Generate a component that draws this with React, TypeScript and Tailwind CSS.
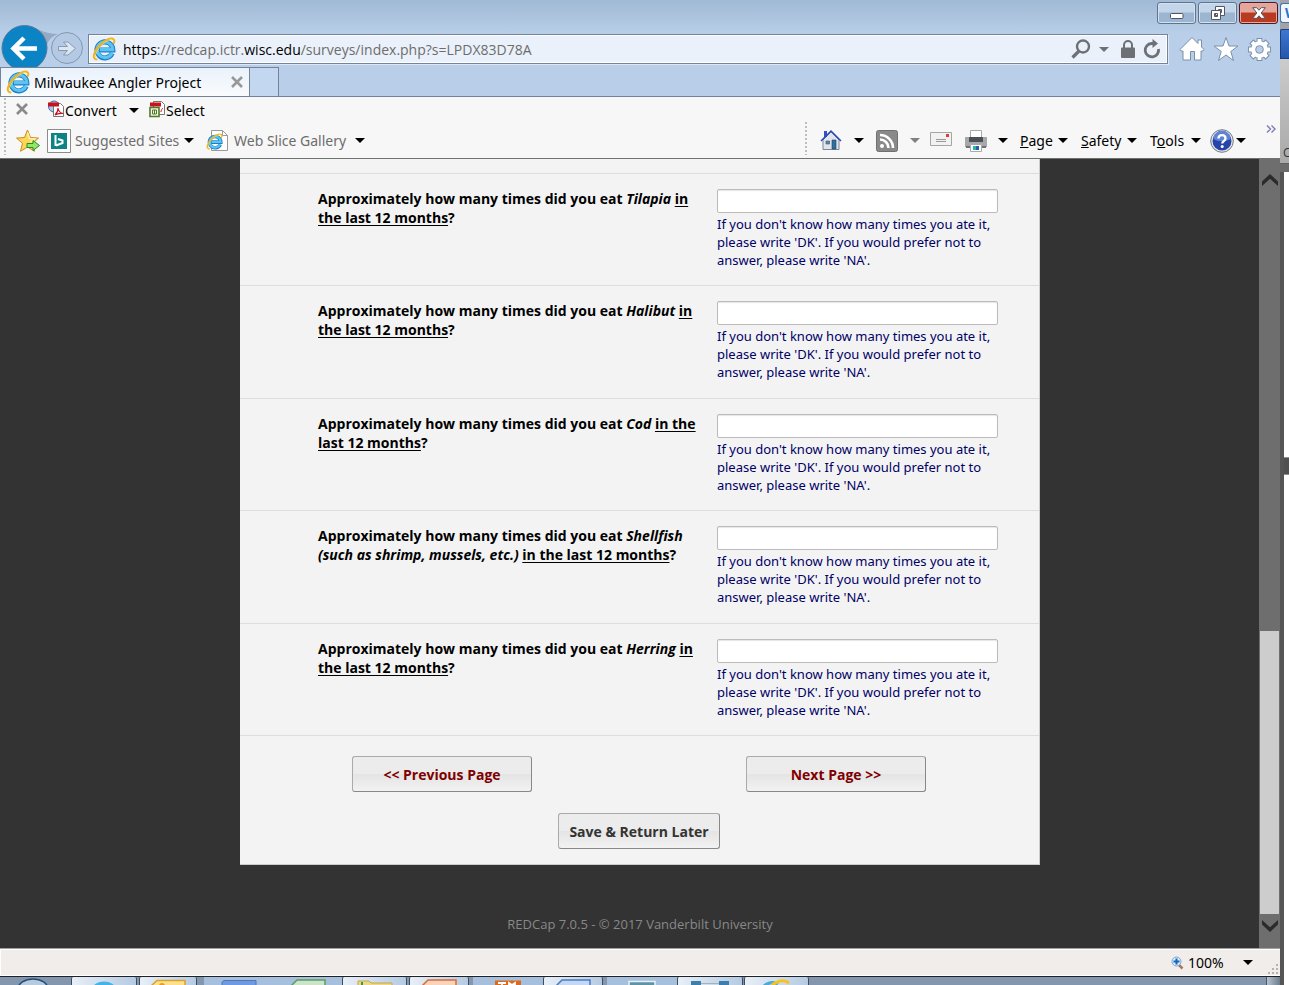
import { useState } from 'react';
import type { ReactNode } from 'react';

const questions: { id: string; fish: string }[] = [
  { id: 'tilapia', fish: 'Tilapia' },
  { id: 'halibut', fish: 'Halibut' },
  { id: 'cod', fish: 'Cod' },
  { id: 'shellfish', fish: 'Shellfish (such as shrimp, mussels, etc.)' },
  { id: 'herring', fish: 'Herring' },
];

function Caret({ className = 'text-black' }: { className?: string }) {
  return (
    <svg viewBox="0 0 10 5" className={`h-[5px] w-[10px] shrink-0 ${className}`} fill="currentColor" aria-hidden="true">
      <path d="M0 0h10L5 5z" />
    </svg>
  );
}

function IeLogo({ className = 'size-6' }: { className?: string }) {
  return (
    <svg viewBox="0 0 24 24" className={`shrink-0 ${className}`} fill="none" aria-hidden="true">
      <path
        d="M20.2 16.2A8 8 0 1 1 20.9 12.9H7.5"
        stroke="#1b7fc4"
        strokeWidth="5"
      />
      <path d="M20 16A7.8 7.8 0 1 1 20.7 12.6H8" stroke="#5cc3f2" strokeWidth="3.2" />
      <path
        d="M4.5 22.5C-.5 21.500 2 14.500 7 9 12 3.300 19 .2 21.500 2.200 22.500 3 22.500 4.600 21.800 6"
        stroke="#f3b51d"
        strokeWidth="2"
        strokeLinecap="round"
      />
      <path d="M3.500 20C3 16.500 7 10.500 11 7 14.500 4 18 2.400 20 2.600" stroke="#ffe071" strokeWidth=".7" />
    </svg>
  );
}

function WindowButton({ label, close, children }: { label: string; close?: boolean; children: ReactNode }) {
  return (
    <button
      type="button"
      aria-label={label}
      className={
        close
          ? 'flex h-[22px] w-[39px] items-center justify-center rounded-[3px] border border-[#521720] bg-linear-to-b from-[#e4a59b] from-45% to-[#b83a20] to-50% shadow-[inset_0_0_0_1px_#e8a99c]'
          : 'flex h-[22px] w-[39px] items-center justify-center rounded-[3px] border border-[#61738a] bg-linear-to-b from-[#c3d5e8] from-45% to-[#9cb5d0] to-50% shadow-[inset_0_0_0_1px_#d3e2f1]'
      }
    >
      {children}
    </button>
  );
}

function TitleBar() {
  return (
    <div className="flex h-[34px] items-start justify-end gap-[2px] bg-linear-to-b from-[#a0b9d4] to-[#b9cfe9] pt-[2px] pr-[2px]">
      <WindowButton label="Minimize">
        <svg viewBox="0 0 14 6" className="mt-[6px] h-[6px] w-[14px]" aria-hidden="true">
          <rect x=".5" y=".5" width="12.500" height="5" rx="1" fill="#fff" stroke="#535666" />
        </svg>
      </WindowButton>
      <WindowButton label="Restore">
        <svg viewBox="0 0 16 16" className="size-4" fill="#fff" stroke="#535666" aria-hidden="true">
          <path d="M5.500 1.500h9v9h-9zM8.500 4.500v3h3v-3z" fillRule="evenodd" />
          <path d="M1.500 5.500h9v9h-9zM4.500 8.500v3h3v-3z" fillRule="evenodd" />
        </svg>
      </WindowButton>
      <WindowButton label="Close" close>
        <svg viewBox="0 0 14 12" className="h-3 w-[14px]" aria-hidden="true">
          <path
            d="M.7.7h4L7 3.200 9.300.7h4L9.200 6l4.100 5.300h-4L7 8.800l-2.300 2.500h-4L4.800 6z"
            fill="#fff"
            stroke="#535666"
          />
        </svg>
      </WindowButton>
    </div>
  );
}

function AddressRow() {
  return (
    <div className="flex h-[33px] items-start bg-[#b9cfe9]">
      <div className="relative h-[33px] w-[88px] shrink-0">
        <svg viewBox="0 0 88 42" className="absolute -top-[9px] left-0 h-[42px] w-[88px]" fill="none" aria-hidden="true">
          <path d="M30 1C42 6 48 9 58 9 50 12 46 18 46 25" fill="#94aac4" />
          <circle cx="24.500" cy="23" r="22.500" fill="#0a84c4" stroke="#55789b" />
          <circle cx="67" cy="23" r="15.500" fill="#b4cae4" stroke="#8497b0" />
          <path d="M37 23.500H15M24 13 13.500 23.500 24 34" stroke="#fff" strokeWidth="4.500" />
          <path d="M58.500 21.500h9l-4-4.500h4.500l7.500 6.500-7.500 6.500h-4.500l4-4.500h-9z" fill="#dbe6f2" stroke="#8799b1" />
        </svg>
        <button type="button" aria-label="Back" className="absolute top-0 left-[2px] h-[33px] w-[45px]" />
        <button type="button" aria-label="Forward" className="absolute top-0 left-[52px] h-[30px] w-[30px]" />
      </div>
      <div className="flex h-[30px] min-w-0 flex-1 items-center border border-[#73839a] bg-[#eaf1fa] pr-[6px] pl-[3px] shadow-[inset_0_0_0_1px_#fff,1px_1px_0_#dce8f5]">
        <IeLogo />
        <div
          role="textbox"
          aria-label="Address"
          contentEditable
          suppressContentEditableWarning
          className="ml-[7px] min-w-0 flex-1 overflow-hidden whitespace-nowrap pt-px text-[14px] leading-5 text-[#6d6d6d] outline-none"
        >
          <span className="text-black">https</span>://redcap.ictr.<span className="text-black">wisc.edu</span>
          /surveys/index.php?s=LPDX83D78A
        </div>
        <button type="button" aria-label="Search">
          <svg viewBox="0 0 20 20" className="size-5" fill="none" stroke="#6d7075" aria-hidden="true">
            <circle cx="12" cy="7.500" r="6" strokeWidth="2.400" />
            <path d="M8 12 1.500 18.500" strokeWidth="3.200" />
          </svg>
        </button>
        <button type="button" aria-label="Search options" className="ml-2">
          <Caret className="text-[#6d7075]" />
        </button>
        <svg viewBox="0 0 14 18" className="ml-3 h-[18px] w-[14px]" aria-hidden="true">
          <path d="M3 8V5a4 4 0 0 1 8 0v3" fill="none" stroke="#6d7075" strokeWidth="2" />
          <rect y="7.500" width="14" height="10.500" rx="1" fill="#6d7075" />
        </svg>
        <button type="button" aria-label="Refresh" className="ml-2">
          <svg viewBox="0 0 18 20" className="h-5 w-[18px]" fill="none" aria-hidden="true">
            <path d="M15.500 10A6.700 6.700 0 1 1 8.500 4.500h2" stroke="#6d7075" strokeWidth="2.800" />
            <path d="M9.500 0 15 4.500 9.500 9z" fill="#6d7075" />
          </svg>
        </button>
      </div>
      <div className="mr-[8px] ml-[11px] flex items-center gap-[8px] pt-[2px]">
        <button type="button" aria-label="Home">
          <svg viewBox="0 0 26 26" className="size-[26px]" fill="#fff" stroke="#7a8fab" strokeLinejoin="round" aria-hidden="true">
            <path d="M13 1.500 19 7.500V4h3.500v7l2.500 2.500-1 1.500h-2v9h-6.500v-8.500h-4V24H4v-9H2L1 13.500z" />
          </svg>
        </button>
        <button type="button" aria-label="Favorites">
          <svg viewBox="0 0 26 26" className="size-[26px]" fill="#fff" stroke="#7a8fab" aria-hidden="true">
            <path d="m13 1.500 3 8.500h9l-7.200 5.500 2.700 9L13 19l-7.500 5.500 2.700-9L1 10h9z" />
          </svg>
        </button>
        <button type="button" aria-label="Tools">
          <svg viewBox="0 0 26 26" className="size-[25px]" aria-hidden="true">
            <g fill="#7a8fab">
              <path d="M10 1h6v24h-6zM1 10h24v6H1z" />
              <path d="M10 1h6v24h-6zM1 10h24v6H1z" transform="rotate(45 13 13)" />
            </g>
            <circle cx="13" cy="13" r="9.500" fill="#7a8fab" />
            <g fill="#fff">
              <path d="M11 2h4v22h-4zM2 11h22v4H2z" />
              <path d="M11 2h4v22h-4zM2 11h22v4H2z" transform="rotate(45 13 13)" />
            </g>
            <circle cx="13" cy="13" r="8.700" fill="#fff" />
            <circle cx="13" cy="13" r="4" fill="#b9cfe9" stroke="#7a8fab" />
          </svg>
        </button>
      </div>
    </div>
  );
}

function TabRow() {
  return (
    <div className="flex h-[30px] border-b border-[#73839a] bg-[#b9cfe9]">
      <div className="flex w-[250px] items-center border border-b-0 border-[#73839a] bg-linear-to-b from-[#eaf2fb] to-[#f9fbfd] pr-[6px] pl-[5px]">
        <IeLogo />
        <span className="ml-[4px] flex-1 whitespace-nowrap pt-px font-['Noto_Sans',sans-serif] text-[14px] leading-5 text-black">
          Milwaukee Angler Project
        </span>
        <button type="button" aria-label="Close tab">
          <svg viewBox="0 0 12 12" className="size-3" stroke="#989898" strokeWidth="2.600" aria-hidden="true">
            <path d="m1 1 10 10M11 1 1 11" />
          </svg>
        </button>
      </div>
      <button type="button" aria-label="New tab" className="w-[29px] border border-b-0 border-l-0 border-[#73839a] bg-[#c3d8f0]" />
    </div>
  );
}

function PdfIcon() {
  return (
    <svg viewBox="0 0 16 18" className="mb-1 h-[18px] w-4" aria-hidden="true">
      <circle cx="6" cy="6.500" r="5.500" fill="#a9c8ea" stroke="#3d6fb0" />
      <path d="M5.500 3.500h7l3 3v10h-10z" fill="#fff" stroke="#777" />
      <path d="M0 2.500h11v4H0z" fill="#c8131c" />
      <path d="M7 15c2-2 3.200-5 3-7 .5 3 2 5 5 5.500-3-.3-6 .2-8 1.500z" fill="none" stroke="#c8131c" strokeWidth="1.200" />
    </svg>
  );
}

function SelectIcon() {
  return (
    <svg viewBox="0 0 16 18" className="mb-1 h-[18px] w-4" aria-hidden="true">
      <path d="M4.500 1.500h8l3 3v10h-11z" fill="#fff" stroke="#777" />
      <path d="M1 2.500h11v4H1z" fill="#c8131c" />
      <path d="M1 7.500h9v9H1z" fill="#f2f7e8" stroke="#4f7a28" strokeWidth="1.600" />
      <path d="M3.500 10h4v4h-4zM5.500 10v4" fill="none" stroke="#4f7a28" />
      <path d="M12 12c0-2 1-3 2-4" stroke="#c8131c" fill="none" />
    </svg>
  );
}

function FavoritesStar() {
  return (
    <svg viewBox="0 0 24 24" className="size-6" aria-hidden="true">
      <path d="m11.500 1 3 7.500 8 .6-6 5.200 2 8-7-4.300-7 4.300 2-8-6-5.200 8-.6z" fill="#fbd65a" stroke="#c98d1b" />
      <path d="m11.500 3.500 2 6 5 .6-4 3" fill="none" stroke="#fff0b0" strokeWidth="1.500" />
      <path d="M11 14.500h6v-3l6.500 5-6.500 5v-3h-6z" fill="#8fe86a" stroke="#2c8a22" />
    </svg>
  );
}

function ToolbarGrip({ className }: { className: string }) {
  return <div className={`w-[2px] bg-[repeating-linear-gradient(#bdbdbd_0_2px,transparent_2px_4px)] ${className}`} />;
}

function Toolbars() {
  return (
    <div className="flex h-[62px] border-b border-[#6d736f] bg-[#f7f7f7] pl-1 font-['Noto_Sans',sans-serif] text-[14px] leading-5">
      <ToolbarGrip className="mt-px mb-[3px]" />
      <div className="flex-1 pl-[10px]">
        <div className="flex h-[27px] items-center text-black">
          <button type="button" aria-label="Close toolbar" className="mr-[20px] pb-1">
            <svg viewBox="0 0 12 12" className="size-3" stroke="#8a8a8a" strokeWidth="2.600" aria-hidden="true">
              <path d="m1 1 10 10M11 1 1 11" />
            </svg>
          </button>
          <button type="button" className="flex items-center">
            <PdfIcon />
            <span className="ml-px w-[64px] text-left">Convert</span>
            <Caret />
          </button>
          <button type="button" className="ml-[10px] flex items-center">
            <SelectIcon />
            <span className="ml-px">Select</span>
          </button>
        </div>
        <div className="flex h-[33px] items-center text-[#6d6d6d]">
          <button type="button" aria-label="Add to Favorites bar">
            <FavoritesStar />
          </button>
          <button type="button" className="ml-[7px] flex items-center">
            <svg viewBox="0 0 24 24" className="size-6" aria-hidden="true">
              <path d="M.5.5h23v23H.5z" fill="#fff" stroke="#8b8b8b" />
              <path d="M4 4h16v16H4z" fill="#0c8484" />
              <path d="M8.500 6v11M9 16.500l6.500-2.500v-2.500L11 10" fill="none" stroke="#fff" strokeWidth="2" />
            </svg>
            <span className="ml-1 w-[109px] text-left whitespace-nowrap">Suggested Sites</span>
            <Caret />
          </button>
          <button type="button" className="ml-3 flex items-center">
            <span className="relative flex h-6 w-[23px]">
              <svg viewBox="0 0 23 24" className="h-6 w-[23px]" aria-hidden="true">
                <path d="M5.500 1.500h11l5 5v15h-16z" fill="#fff" stroke="#999" />
                <path d="M16.500 1.500v5h5" fill="none" stroke="#999" />
              </svg>
              <span className="absolute top-1 left-0">
                <IeLogo className="size-[17px]" />
              </span>
            </span>
            <span className="ml-[5px] w-[121px] text-left whitespace-nowrap">Web Slice Gallery</span>
            <Caret />
          </button>
        </div>
      </div>

      <ToolbarGrip className="mt-[25px] mb-[3px]" />
      <div className="flex h-[35px] items-center self-end pl-[13px] text-black">
        <button type="button" aria-label="Home" className="flex items-center gap-3">
          <svg viewBox="0 0 22 22" className="mb-[2px] size-[22px]" aria-hidden="true">
            <path d="M3 11v9.500h16V11l-8-8z" fill="#dfe5ee" stroke="#7d8797" />
            <path d="M4 2h3v6H4z" fill="#3a4fc4" />
            <path d="M1 12 11 2l10 10" fill="none" stroke="#3347b5" strokeWidth="1.500" />
            <path d="M12 11h4v9h-4z" fill="#2f6fa8" stroke="#244" strokeWidth=".6" />
            <path d="M6 12h3.500v3H6z" fill="#5d87b3" stroke="#455" strokeWidth=".6" />
          </svg>
          <Caret />
        </button>
        <button type="button" aria-label="Feeds" className="ml-3 flex items-center gap-3">
          <svg viewBox="0 0 22 22" className="size-[22px]" fill="none" aria-hidden="true">
            <rect x=".5" y=".5" width="21" height="21" rx="2" fill="#898989" stroke="#707070" />
            <circle cx="6" cy="16" r="2" fill="#fff" />
            <path d="M4 9.500a8.500 8.500 0 0 1 8.500 8.500M4 5a13 13 0 0 1 13 13" stroke="#fff" strokeWidth="2.600" />
          </svg>
          <Caret className="text-[#808080]" />
        </button>
        <button type="button" aria-label="Read mail" className="ml-[10px]">
          <svg viewBox="0 0 22 16" className="mb-1 h-4 w-[22px]" aria-hidden="true">
            <path d="M.5 1.500h21v13H.5z" fill="#f2f2f2" stroke="#a5a5a5" />
            <path d="M16 3h3v3h-3z" fill="#e23a36" />
            <path d="M6 8.500h10M6 10.500h10" stroke="#999" />
          </svg>
        </button>
        <button type="button" aria-label="Print" className="ml-3 flex items-center gap-[10px]">
          <svg viewBox="0 0 24 24" className="size-6" aria-hidden="true">
            <path d="M6.500 1.500h11v8h-11z" fill="#fff" stroke="#a9a9a9" />
            <path d="M1 8h22v10H1z" fill="#a5a9ae" />
            <path d="M5 8h14v5H5z" fill="#4c4f54" />
            <path d="M2 17h20v2H2z" fill="#6f7377" />
            <path d="M6.500 15.500h11v7h-11z" fill="#fff" stroke="#aaa" />
            <path d="M9 17h3v4H9z" fill="#2bb5b1" />
            <path d="M12 17h3v4h-3z" fill="#275fa8" />
          </svg>
          <Caret />
        </button>
        <button type="button" className="ml-3 flex items-center">
          <span className="w-[38px] text-left"><u>P</u>age</span>
          <Caret />
        </button>
        <button type="button" className="ml-[13px] flex items-center">
          <span className="w-[46px] text-left"><u>S</u>afety</span>
          <Caret />
        </button>
        <button type="button" className="ml-[13px] flex items-center">
          <span className="w-[41px] text-left">T<u>o</u>ols</span>
          <Caret />
        </button>
        <button type="button" aria-label="Help" className="ml-[9px] flex items-center gap-[2px]">
          <svg viewBox="0 0 24 24" className="size-6" aria-hidden="true">
            <circle cx="12" cy="12" r="11.300" fill="#e5e5ea" stroke="#777a85" />
            <circle cx="12" cy="12" r="9.500" fill="#2546a8" />
            <path d="M3.500 10a8.500 8.500 0 0 1 17 0c-5 3-12 3-17 0z" fill="#5f83d6" />
            <path d="M8.500 9.500c0-4.500 7-4.500 7 0 0 2.500-3.300 2.500-3.300 5" fill="none" stroke="#fff" strokeWidth="2.300" />
            <circle cx="12.200" cy="17.500" r="1.500" fill="#fff" />
          </svg>
          <Caret />
        </button>
        <button type="button" aria-label="More commands" className="mr-1 mb-6 ml-5">
          <svg viewBox="0 0 10 8" className="h-2 w-[10px]" fill="none" stroke="#7c7cb4" strokeWidth="1.400" aria-hidden="true">
            <path d="m1 .5 3.500 3.500L1 7.500M5.500.5 9 4 5.500 7.500" />
          </svg>
        </button>
      </div>
    </div>
  );
}

function Question({ id, fish }: { id: string; fish: string }) {
  const [value, setValue] = useState('');

  return (
    <div className="flex border-t border-[#dddddd] pt-[15px] pr-[41px] pl-[78px]">
      <label htmlFor={id} className="w-[385px] shrink-0 text-[14px] leading-[19px] font-bold text-black">
        Approximately how many times did you eat <em>{fish}</em>{' '}
        <span className="underline decoration-1 underline-offset-2 [text-decoration-skip-ink:none]">in the last 12 months</span>?
      </label>
      <div className="ml-[14px] flex-1">
        <input
          id={id}
          type="text"
          value={value}
          onChange={(e) => setValue(e.target.value)}
          aria-describedby={`${id}-note`}
          className="block h-6 w-full rounded-[2px] border border-[#bbbbbb] bg-white px-1 text-[13px] shadow-[inset_0_1px_1px_#e6e6e6]"
        />
        <p id={`${id}-note`} className="mt-[2px] font-['Noto_Sans',sans-serif] text-[13px] leading-[18px] text-[#000066]">
          If you don't know how many times you ate it, please write 'DK'. If you would prefer not to answer, please write 'NA'.
        </p>
      </div>
    </div>
  );
}

const surveyButton =
  'h-9 rounded-[3px] border border-t-[#aaaaaa] border-r-[#888888] border-b-[#888888] border-l-[#aaaaaa] bg-linear-to-b from-[#ececec] from-50% via-[#e4e4e4] via-50% to-[#f2f2f2] pt-[2px] text-[14px] leading-5 font-bold';

function Survey() {
  return (
    <main className="relative flex flex-1 flex-col items-center bg-[#333333] pr-[21px] pl-[21px]">
      <form className="w-full max-w-[800px] border-r border-b border-[#cccccc] bg-[#f3f3f3] pt-[14px]" onSubmit={(e) => e.preventDefault()}>
        <div className="grid min-h-[562px] auto-rows-fr">
          {questions.map((q) => (
            <Question key={q.id} id={q.id} fish={q.fish} />
          ))}
        </div>
        <div className="flex flex-col items-center gap-[21px] border-t border-[#dddddd] pt-5 pr-px pb-[15px]">
          <div className="flex w-full justify-between px-[112px]">
            <button type="submit" className={`${surveyButton} w-[180px] text-[#800000]`}>&lt;&lt; Previous Page</button>
            <button type="submit" className={`${surveyButton} w-[180px] text-[#800000]`}>Next Page &gt;&gt;</button>
          </div>
          <button type="submit" className={`${surveyButton} w-[162px] text-[#333333]`}>Save &amp; Return Later</button>
        </div>
      </form>
      <footer className="mt-[50px] pb-[14px] text-[13px] leading-[18px] text-[#888888]">
        REDCap 7.0.5 - © 2017 Vanderbilt University
      </footer>

      <div className="absolute inset-y-0 right-0 flex w-[21px] flex-col items-center bg-[#6e6e6e]">
        <button type="button" aria-label="Scroll up" className="flex h-[42px] items-center">
          <svg viewBox="0 0 16 12" className="h-3 w-4" fill="#2b2b2b" aria-hidden="true">
            <path d="m8 0 8 7.500V12L8 4.800 0 12V7.500z" />
          </svg>
        </button>
        <div className="flex-1" />
        <div className="h-[283px] w-[19px] bg-[#cdcdcd]" />
        <button type="button" aria-label="Scroll down" className="flex h-[34px] items-start pt-[6px]">
          <svg viewBox="0 0 16 12" className="h-3 w-4" fill="#2b2b2b" aria-hidden="true">
            <path d="m8 12 8-7.500V0L8 7.200 0 0v4.500z" />
          </svg>
        </button>
      </div>
    </main>
  );
}

function StatusBar() {
  return (
    <div className="flex h-7 items-center justify-end border-t border-[#a0a0a0] bg-[#f0edeb] font-['Noto_Sans',sans-serif] text-[14px] leading-5 text-black shadow-[inset_1px_1px_0_#fff,inset_0_-1px_0_#fff]">
      <button type="button" className="flex items-center">
        <svg viewBox="0 0 13 14" className="h-[14px] w-[13px]" aria-hidden="true">
          <path d="m7.500 8.500 4 4" stroke="#a6785c" strokeWidth="2.500" />
          <circle cx="5.500" cy="5.500" r="4.500" fill="#d7ebfb" stroke="#7fa6cb" />
          <path d="M5.500 2.500v6M2.500 5.500h6" stroke="#1767bd" strokeWidth="2" />
        </svg>
        <span className="ml-1 w-[55px] text-left">100%</span>
        <Caret />
      </button>
      <svg viewBox="0 0 12 12" className="mr-px ml-[14px] size-3 self-end" fill="#b5b2b0" aria-hidden="true">
        <path d="M9 0h2v2H9zM5 4h2v2H5zM9 4h2v2H9zM1 8h2v2H1zM5 8h2v2H5zM9 8h2v2H9z" />
      </svg>
    </div>
  );
}

function TaskButton({ label, className, children }: { label: string; className: string; children: ReactNode }) {
  return (
    <button type="button" aria-label={label} className={`flex h-2 shrink-0 items-start justify-center overflow-hidden ${className}`}>
      {children}
    </button>
  );
}

function Taskbar() {
  const open = 'rounded-t-[2px] border-x border-[#3c4c60] bg-linear-to-r from-[#e8eff7] to-[#b5cae2]';
  const pinned = 'bg-[#a5bfdd]';

  return (
    <div className="flex h-[9px] border-t border-[#1e2228] bg-[#8396ae]">
      <TaskButton label="Start" className="w-[71px] pr-[6px]">
        <svg viewBox="0 0 32 8" className="h-2 w-8" aria-hidden="true">
          <ellipse cx="16" cy="12" rx="15" ry="10" fill="#b8cbdc" stroke="#214f7c" strokeWidth="1.500" />
        </svg>
      </TaskButton>
      <TaskButton label="Internet Explorer" className={`${open} w-[66px]`}>
        <svg viewBox="0 0 24 8" className="h-2 w-6" aria-hidden="true"><ellipse cx="12" cy="11" rx="11" ry="6.500" fill="#42b4e6" /></svg>
      </TaskButton>
      <TaskButton label="Outlook" className={`${open} ml-[2px] w-[58px]`}>
        <svg viewBox="0 0 36 8" className="h-2 w-9" aria-hidden="true">
          <path d="M1 9 7 3.500h28V9" fill="#fbe28a" stroke="#dda132" strokeWidth="1.500" />
          <circle cx="12" cy="9" r="3" fill="#e89b1e" />
        </svg>
      </TaskButton>
      <TaskButton label="Desktop" className={`${pinned} ml-[7px] w-[69px]`}>
        <svg viewBox="0 0 36 8" className="h-2 w-9" aria-hidden="true"><path d="M1 9V5l2-1.500h32V9" fill="#6f9ae0" stroke="#4d77c0" /></svg>
      </TaskButton>
      <TaskButton label="Excel" className={`${pinned} w-[69px]`}>
        <svg viewBox="0 0 36 8" className="h-2 w-9" aria-hidden="true"><path d="m1 9 6-6h28v6" fill="#cbe4cb" stroke="#5c9f5c" strokeWidth="1.500" /></svg>
      </TaskButton>
      <TaskButton label="Explorer" className={`${open} w-[65px]`}>
        <svg viewBox="0 0 36 8" className="h-2 w-9" aria-hidden="true">
          <path d="M1 9V4h11l2 2h21v3" fill="#ecd78a" stroke="#c7a844" />
          <path d="M4 5h2v4H4z" fill="#3a9a44" />
        </svg>
      </TaskButton>
      <TaskButton label="PowerPoint" className={`${open} ml-[2px] w-[60px]`}>
        <svg viewBox="0 0 36 8" className="h-2 w-9" aria-hidden="true"><path d="m1 9 6-6h28v6" fill="#f9d3ba" stroke="#d86d3b" strokeWidth="1.500" /></svg>
      </TaskButton>
      <TaskButton label="Media" className={`${pinned} ml-[4px] w-[70px]`}>
        <svg viewBox="0 0 26 8" className="h-2 w-[26px]" aria-hidden="true">
          <path d="M0 3.500h26V8H0z" fill="#dc6a1e" />
          <path d="M3 6h8M7 6v2M14 8V6l3 2 3-2v2" stroke="#fff" strokeWidth="1.800" fill="none" />
        </svg>
      </TaskButton>
      <TaskButton label="Word" className={`${open} w-[60px]`}>
        <svg viewBox="0 0 36 8" className="h-2 w-9" aria-hidden="true"><path d="m1 9 6-6h28v6" fill="#c3d8f5" stroke="#4b7cc0" strokeWidth="1.500" /></svg>
      </TaskButton>
      <TaskButton label="Computer" className={`${pinned} ml-[4px] w-[70px]`}>
        <svg viewBox="0 0 28 8" className="h-2 w-7" aria-hidden="true"><path d="M1 9V4.500h26V9" fill="#5e93a8" stroke="#e8f2f7" strokeWidth="1.500" /></svg>
      </TaskButton>
      <TaskButton label="Remote Desktop" className={`${open} w-[66px]`}>
        <svg viewBox="0 0 38 8" className="h-2 w-[38px]" aria-hidden="true">
          <path d="M0 4h10v4H0zM28 4h10v4H28z" fill="#3b7fae" />
          <path d="M10 6.500h18" stroke="#a8b0b8" />
        </svg>
      </TaskButton>
      <TaskButton label="Web page" className={`${open} ml-px w-[65px]`}>
        <svg viewBox="0 0 30 8" className="h-2 w-[30px]" fill="none" aria-hidden="true">
          <path d="M2 9c5-4 10-4 14-2" stroke="#4ba9d8" strokeWidth="3" />
          <path d="M10 8c5-4 12-6 17-2" stroke="#f6c51c" strokeWidth="3" />
        </svg>
      </TaskButton>
      <div className="ml-auto w-[14px] border-l border-[#49576a] bg-linear-to-r from-[#b6c2ce] to-[#6d7d8e]" />
    </div>
  );
}

// Sliver of the window that sits behind the browser
function BackgroundWindow() {
  return (
    <div className="flex w-[9px] shrink-0 flex-col bg-[#a4a4a4] pt-[3px]" aria-hidden="true">
      <div className="h-5 overflow-hidden rounded-l-[3px] border border-r-0 border-[#4673ab] bg-[#f0f6fd] pl-1 text-[14px] leading-[18px] font-bold text-[#2a6fc0]">
        W
      </div>
      <div className="mt-[6px] h-[30px] rounded-tl-[2px] border border-r-0 border-[#1c3f80] bg-linear-to-b from-[#3d77d0] to-[#2458ac]" />
      <div className="flex h-[105px] items-end overflow-hidden border-b border-[#606060] bg-linear-to-b from-[#cccccc] to-[#a9a9a9] pl-[3px] text-[12px] leading-5 text-[#333333]">
        C
      </div>
      <div className="h-2 bg-[#6b6b6b]" />
      <div className="flex flex-1 flex-col border-l-4 border-[#555555] bg-white">
        <div className="mt-[285px] h-[18px] border-y border-[#8f8f9b] bg-[#505050]" />
      </div>
    </div>
  );
}

export default function App() {
  return (
    <div className="flex min-h-screen font-['Open_Sans',sans-serif]">
      <div className="flex min-w-0 flex-1 flex-col">
        <TitleBar />
        <AddressRow />
        <TabRow />
        <Toolbars />
        <Survey />
        <StatusBar />
        <Taskbar />
      </div>
      <BackgroundWindow />
    </div>
  );
}
